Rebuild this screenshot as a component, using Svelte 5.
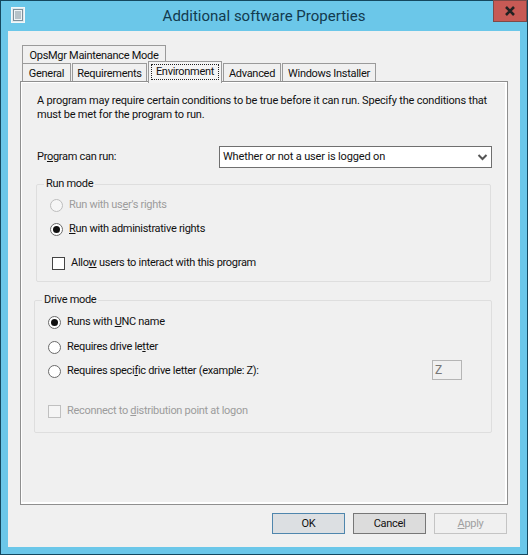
<script>
  const tabs2 = [
    { label: 'General', w: 49 },
    { label: 'Requirements', w: 75 },
    { label: 'Environment', w: 74, active: true },
    { label: 'Advanced', w: 58 },
    { label: 'Windows Installer', w: 94 }
  ];
</script>

<div class="window">
  <header class="titlebar">
    <svg class="appicon" width="14" height="16" viewBox="0 0 14 16">
      <rect x="0.5" y="0.5" width="13" height="15" fill="#dfe9ee" stroke="#f4f7f8"/>
      <rect x="2.5" y="2.5" width="9" height="11" fill="#eef3f5" stroke="#7d8f9a"/>
      <path d="M4 5h6M4 7h6M4 9h6M4 11h6" stroke="#7f919c"/>
    </svg>
    <h1>Additional software Properties</h1>
    <button class="close" aria-label="Close">
      <svg width="12" height="10" viewBox="0 0 12 10"><path d="M2 1l8 8M10 1l-8 8" stroke="#222" stroke-width="2.6"/></svg>
    </button>
  </header>

  <div class="client">
    <div class="tabs">
      <div class="tabrow first"><div class="tab ops">OpsMgr Maintenance Mode</div></div>
      <div class="tabrow">
        {#each tabs2 as t}
          <div class="tab" class:active={t.active} style="width:{t.w}px">
            {#if t.active}<span class="focus">{t.label}</span>{:else}{t.label}{/if}
          </div>
        {/each}
      </div>
    </div>

    <section class="panel">
      <p class="intro">A program may require certain conditions to be true before it can run. Specify the conditions that<br>must be met for the program to run.</p>

      <div class="runline">
        <span>Pr<u>o</u>gram can run:</span>
        <div class="select">
          <span>Whether or not a user is logged on</span>
          <svg width="11" height="7" viewBox="0 0 11 7"><path d="M1.5 1l4 4 4-4" fill="none" stroke="#555" stroke-width="2"/></svg>
        </div>
      </div>

      <fieldset class="group run">
        <legend>Run mode</legend>
        <div class="opt disabled first-opt"><i class="radio"></i><span>Run with us<u>e</u>r's rights</span></div>
        <div class="opt second"><i class="radio on"></i><span><u>R</u>un with administrative rights</span></div>
        <div class="opt chk"><i class="check"></i><span>Allo<u>w</u> users to interact with this program</span></div>
      </fieldset>

      <fieldset class="group drive">
        <legend>Drive mode</legend>
        <div class="opt d1"><i class="radio on"></i><span>Runs with <u>U</u>NC name</span></div>
        <div class="opt d2"><i class="radio"></i><span>Requires drive le<u>t</u>ter</span></div>
        <div class="opt d3">
          <i class="radio"></i><span>Requires speci<u>f</u>ic drive letter (example: Z):</span>
          <div class="zbox">Z</div>
        </div>
        <div class="opt d4 disabled"><i class="check"></i><span>Reconnect to <u>d</u>istribution point at logon</span></div>
      </fieldset>
    </section>

    <footer class="buttons">
      <button class="btn default">OK</button>
      <button class="btn">Cancel</button>
      <button class="btn off"><u>A</u>pply</button>
    </footer>
  </div>
</div>

<style>
  :global(body) { margin: 0; }
  * { box-sizing: border-box; }
  .window {
    width: 528px; height: 555px; padding: 0 7px 7px;
    background: #6bc7e9; border: 1px solid #14485f;
    font: 11px/16px Roboto, sans-serif; letter-spacing: -0.3px; color: #111;
    display: flex; flex-direction: column;
  }
  .titlebar { height: 30px; flex: none; position: relative; display: flex; justify-content: center; align-items: center; }
  .titlebar h1 { margin: 0; font-size: 15px; font-weight: 400; letter-spacing: 0; color: #123a4e; position: relative; }
  .appicon { position: absolute; left: 3px; top: 6px; }
  .close {
    position: absolute; right: -7px; top: -1px; width: 34px; height: 22px; padding: 0;
    background: #c75a55; border: 1px solid #7f4a48; display: flex; align-items: center; justify-content: center;
  }
  .client { flex: 1; background: #f0f0f0; display: flex; flex-direction: column; padding: 14px 12px 0; border: 0; }
  .tabs { height: 36px; flex: none; }
  .tabrow { display: flex; height: 18px; padding-left: 2px; }
  .tab {
    height: 19px; background: #f0f0f0; border: 1px solid #9a9a9a; border-bottom: 0;
    text-align: center; line-height: 17px; padding-top: 1px; margin-right: 1px; white-space: nowrap;
  }
  .tab.ops { width: 144px; }
  .tab.active {
    position: relative; z-index: 2; height: 22px; margin-top: -2px; background: #f4f4f4;
    padding: 2px 2px 0; line-height: 15px;
  }
  .focus { display: block; outline: 1px dotted #222; outline-offset: -1px; height: 16px; }
  .panel {
    height: 424px; width: 488px; flex: none; background: #f0f0f0;
    border: 1px solid #8f8f8f; box-shadow: inset -2px -2px 0 #fff, inset 1px 1px 0 #fff;
    padding: 12px 16px 0; position: relative;
  }
  .intro { margin: 0; height: 34px; line-height: 14px; letter-spacing: -0.2px; white-space: nowrap; }
  .runline { display: flex; align-items: center; justify-content: space-between; margin-top: 18px; margin-right: -1px; }
  .select {
    width: 273px; height: 22px; background: #fff; border: 1px solid #6f6f6f; letter-spacing: -0.15px;
    display: flex; justify-content: space-between; align-items: center; padding: 0 3px 0 3px;
  }
  .group {
    margin: 0; padding: 0; min-width: 0; position: relative; border: 1px solid #dedede; border-radius: 2px;
  }
  .group legend { padding: 0 2px; margin-left: 7px; line-height: 16px; }
  .run { width: 455px; height: 106px; margin: 8px 0 0 -1px; }
  .drive { width: 458px; height: 141px; margin: 10px 0 0 -3px; }
  .opt { display: flex; align-items: center; gap: 6px; height: 16px; position: relative; }
  .disabled { color: #9c9c9c; }
  .first-opt { margin: 5px 0 0 13px; }
  .second { margin: 8px 0 0 13px; }
  .chk { margin: 18px 0 0 15px; }
  .d1 { margin: 6px 0 0 13px; }
  .d2 { margin: 9px 0 0 13px; }
  .d3 { margin: 8px 0 0 13px; }
  .d4 { margin: 24px 0 0 13px; }
  .radio {
    width: 13px; height: 13px; flex: none; border-radius: 50%; border: 1px solid #6a6a6a; background: #fff; display: block; position: relative;
  }
  .disabled .radio { border-color: #bdbdbd; background: #f6f6f6; }
  .radio.on::after { content: ""; position: absolute; inset: 2px; border-radius: 50%; background: #111; }
  .check { width: 13px; height: 13px; flex: none; border: 1px solid #444; background: #fff; display: block; }
  .disabled .check { border-color: #c0c0c0; background: #f5f5f5; }
  u { text-underline-offset: 1px; }
  .zbox {
    position: absolute; left: 384px; top: -3px; width: 30px; height: 20px; border: 1px solid #b5b5b5;
    color: #777; padding-left: 2px; line-height: 18px; font-size: 12px;
  }
  .buttons { display: flex; gap: 8px; justify-content: flex-end; padding: 8px 1px 0 0; width: 488px; }
  .btn {
    width: 73px; height: 21px; padding: 0; font: inherit; letter-spacing: inherit; color: #111;
    background: #dcdcdc; border: 1px solid #777;
  }
  .btn.default { background: #dcdfe2; border-color: #4f86ad; }
  .btn.off { background: #f0f0f0; border-color: #c4c4c4; color: #a0a0a0; }
</style>
